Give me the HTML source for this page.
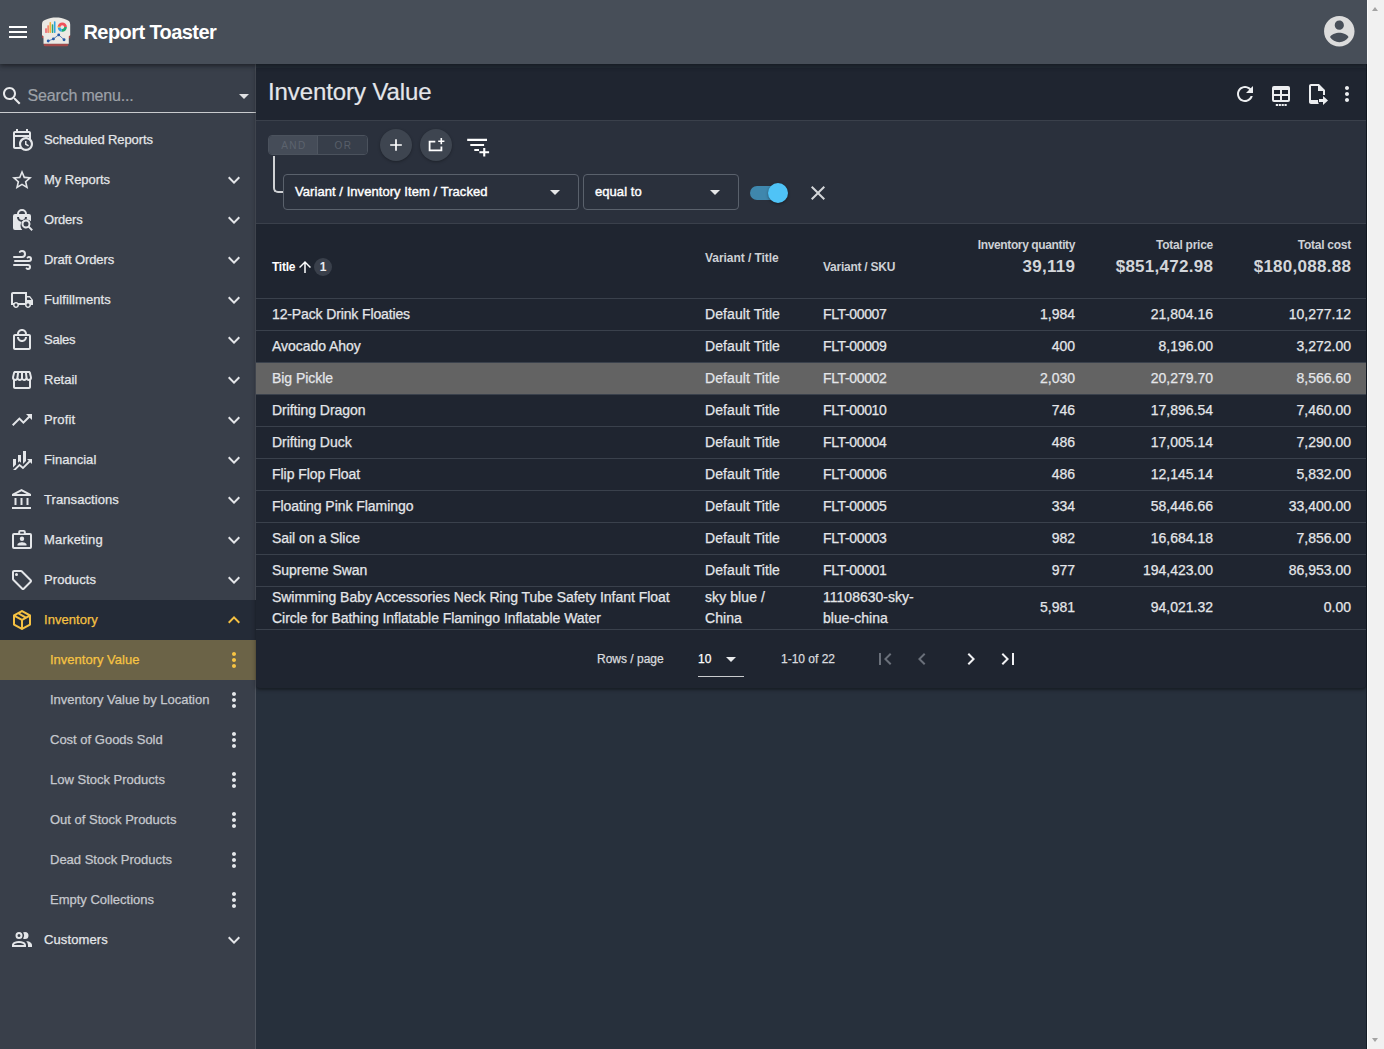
<!DOCTYPE html>
<html lang="en">
<head>
<meta charset="utf-8">
<title>Report Toaster - Inventory Value</title>
<style>
*{box-sizing:border-box;margin:0;padding:0}
html,body{width:1384px;height:1049px;overflow:hidden;background:#27303c;font-family:"Liberation Sans",sans-serif;color:#e6e8eb;-webkit-font-smoothing:antialiased}
svg{display:block;fill:currentColor}
.abs{position:absolute}
/* header */
#hdr{position:absolute;left:0;top:0;width:1367px;height:64px;background:#474e58;z-index:5;box-shadow:0 2px 4px rgba(0,0,0,.35),0 0 8px rgba(0,0,0,.2)}
#hdr .menu{position:absolute;left:6px;top:20px;width:24px;height:24px;color:#fff}
#hdr .logo{position:absolute;left:42px;top:18px;width:28px;height:28px;overflow:visible}
#hdr .ttl{position:absolute;left:83.500px;top:19px;font-size:20px;line-height:26px;font-weight:700;color:#fff;white-space:nowrap;letter-spacing:-.58px}
#hdr .acct{position:absolute;left:1320.900px;top:13px;width:36.600px;height:36.600px;color:#dcdcdc}
/* scrollbar */
#sb{position:absolute;left:1367px;top:0;width:17px;height:1049px;background:#f1f1f1;border-left:1px solid #fcfcfc;z-index:9}
#sb i{position:absolute;left:4px;width:0;height:0;border-left:3.700px solid transparent;border-right:3.700px solid transparent}
#sb i.u{top:7px;border-bottom:4px solid #a3a3a3}
#sb i.d{bottom:7px;border-top:4px solid #a3a3a3}
/* sidebar */
#side{position:absolute;left:0;top:64px;width:256px;height:985px;background:#393f4a;border-right:1px solid #4d535d}
#side .search{position:absolute;left:0;top:8px;width:256px;height:41px;border-bottom:1px solid #c9cbce}
#side .search .si{position:absolute;left:0;top:12px;width:24px;height:24px;color:#e9eaec}
#side .search .ph{position:absolute;left:27.500px;top:14px;font-size:16px;line-height:20px;color:#9da1a8;white-space:nowrap;letter-spacing:-.18px;-webkit-text-stroke:.2px}
#side .search .dd{position:absolute;left:232px;top:12px;width:24px;height:24px;color:#e0e1e3}
.mi{position:absolute;left:0;width:256px;height:40px;color:#e4e6e9;font-size:13px;letter-spacing:0;-webkit-text-stroke:.25px}
.mi .ic{position:absolute;left:10px;top:8px;width:24px;height:24px}
.mi .lb{position:absolute;left:44px;top:0;line-height:40px;white-space:nowrap}
.mi .ch{position:absolute;left:222px;top:8px;width:24px;height:24px}
.mi.sub .lb{left:50px;color:#c6c9ce;letter-spacing:0}
.mi.open{background:#242b37;color:#f5c142}
.mi.sel{background:#6b6347}
.mi.sel .lb{color:#f7c443}
.mi.sel .ch{color:#f7c443}
/* main */
#card{position:absolute;left:256px;top:68px;width:1110px;height:620px;border-radius:0 0 4px 4px;background:#1f2530;box-shadow:0 1px 5px rgba(0,0,0,.3),0 2px 2px rgba(0,0,0,.2)}
#pt{position:absolute;left:12px;top:8px;font-size:24px;line-height:32px;color:#e4e6ea;white-space:nowrap;letter-spacing:-.1px;-webkit-text-stroke:.2px}
.tb{position:absolute;top:14px;width:24px;height:24px;color:#eceef0}
#fp{position:absolute;left:0;top:52px;width:1110px;height:104px;background:#2a303c;border-top:1px solid #3a404b;border-bottom:1px solid #3a404b}

.andor{position:absolute;left:12px;top:14px;width:100px;height:20px;border:1px solid #4b525d;border-radius:4px;overflow:hidden;font-size:10px;line-height:19px;letter-spacing:1.5px;color:#5c636e;text-align:center}
.andor .a{position:absolute;left:0;top:0;width:49px;height:18px;background:#454c58;border-right:1px solid #4f5661;padding-left:2px}
.andor .o{position:absolute;left:49px;top:0;width:49px;height:18px;background:#373e4a;padding-left:2px;color:#575e69}
.rb{position:absolute;top:8px;width:32px;height:32px;border-radius:50%;background:#3e4550;box-shadow:0 1px 3px rgba(0,0,0,.3);color:#fff}
.rb svg{position:absolute}
.fadd{position:absolute;left:208px;top:11px;width:28px;height:28px;color:#fff}
.conn{position:absolute;left:17px;top:35px;width:11px;height:37px;border-left:2px solid #cfd1d4;border-bottom:2px solid #cfd1d4;border-bottom-left-radius:5px}
.dds{position:absolute;top:53px;height:36px;border:1px solid #5a616c;border-radius:4px;font-size:13px;color:#fff;white-space:nowrap;-webkit-text-stroke:.4px;letter-spacing:.06px}
.dds span{position:absolute;left:11px;top:0;line-height:33px}
.dds svg{position:absolute;right:11px;top:5px;width:24px;height:24px;color:#e6e7e9}
.tog{position:absolute;left:494px;top:65px;width:36px;height:14px;border-radius:7px;background:#3f87ad}
.tog i{position:absolute;left:18px;top:-3px;width:20px;height:20px;border-radius:50%;background:#4fc3f7;box-shadow:0 1px 3px rgba(0,0,0,.4)}
.cx{position:absolute;left:550px;top:60px;width:24px;height:24px;color:#d4d6d9}
#th{position:absolute;left:0;top:156px;width:1110px;height:75px;border-bottom:1px solid #3a414c;font-weight:700;font-size:12px;color:#cdd0d5;white-space:nowrap;letter-spacing:-.25px}
#th span{position:absolute;line-height:16px}
#th .h1{left:16px;top:35px;color:#fff}
#th .up{position:absolute;left:40px;top:34.400px;width:18px;height:18px;color:#fff}
#th .bdg{left:58px;top:34.200px;width:18px;height:18px;line-height:18px;border-radius:50%;background:#3a404b;text-align:center;color:#e8eaed}
#th .h2{left:449px;top:26px;letter-spacing:-.05px}
#th .h3{left:567px;top:35px}
#th .hr{top:13px}
#th .hs{top:32px;font-size:17px;line-height:22px;color:#d3d6da;letter-spacing:.28px;margin-right:-.28px}
.tr{position:absolute;left:0;width:1110px;height:32px;border-bottom:1px solid #3a414c;font-size:14px;line-height:31px;color:#e4e6e9;white-space:nowrap;-webkit-text-stroke:.25px}
.tr span{position:absolute;top:0}
.tr .c1{left:16px;letter-spacing:-.04px}.tr .c2{left:449px;letter-spacing:.08px}.tr .c3{left:567px;letter-spacing:-.36px}
.tr .c4{right:291px}.tr .c5{right:153px}.tr .c6{right:15px}
.tr.hl{background:#636363}
.tr.tall{height:43px;line-height:40.500px}
.tr.tall .c1,.tr.tall .c2,.tr.tall .c3{line-height:21px}
#pg{position:absolute;left:0;top:563px;width:1110px;height:57px;font-size:12px;color:#d9dbdf;white-space:nowrap;-webkit-text-stroke:.25px}
#pg span{position:absolute;line-height:16px;top:20px}
#pg .rp{left:341px}#pg .rn{left:442px;color:#fff}#pg .cnt{left:525px}
#pg .ul{position:absolute;left:442px;top:44.500px;width:46px;height:1px;background:#c9cbce}
.pa{position:absolute;top:16px;width:24px;height:24px}
</style>
</head>
<body>
<div id="hdr">
  <svg class="menu" viewBox="0 0 24 24"><path d="M3 18h18v-2H3v2zm0-5h18v-2H3v2zm0-7v2h18V6H3z"/></svg>
  <svg class="logo" viewBox="0 0 28 28">
    <path d="M1.700 25.400h24.600v1.300a1.500 1.500 0 0 1-1.500 1.500H3.200a1.500 1.500 0 0 1-1.500-1.500z" fill="#a24a4a"/>
    <rect x="-.1" y="17" width="28.300" height="3.200" rx="1" fill="#a74545"/>
    <path d="M0 6.500C0 3.500 1.200 2.600 3.500 1.700 7 .100 10.500-.450 14-.450s7 .550 10.500 2.150C26.800 2.600 28.200 3.500 28.200 6.500V17.200l-1.400 1V25.800H1.500V18.200L0 17.200z" fill="#ebe9e4"/>
    <rect x="3" y="10.200" width="2.100" height="4.700" rx=".6" fill="#ee7b82"/>
    <rect x="5.300" y="7.200" width="1.800" height="7.700" rx=".6" fill="#f08a70"/>
    <rect x="7.500" y="4.100" width="1.600" height="10.800" rx=".6" fill="#f6b23c"/>
    <rect x="9.800" y="6.200" width="1.500" height="8.700" rx=".6" fill="#2fa56f"/>
    <rect x="11.900" y="3.300" width="1.600" height="11.600" rx=".6" fill="#2ea4e4"/>
    <g fill="none" stroke-width="2.700">
      <path d="M17.050 9.100A3.250 3.250 0 0 1 23.550 9.100" stroke="#f0525a"/>
      <path d="M23.550 9.100A3.250 3.250 0 0 1 19.700 12.300" stroke="#1fa973"/>
      <path d="M19.700 12.300A3.250 3.250 0 0 1 17.050 9.300" stroke="#2ea4e4"/>
      <path d="M17.050 9.400A3.250 3.250 0 0 1 17.150 8.300" stroke="#f9b233"/>
    </g>
    <path d="M6.200 23L11.400 20.900 16.700 16.900 22.050 21.700" fill="none" stroke="#2a5ca8" stroke-width=".7"/>
    <g fill="#2458a6"><circle cx="6.200" cy="23" r="1.450"/><circle cx="11.400" cy="20.900" r="1.450"/><circle cx="16.700" cy="16.900" r="1.450"/><circle cx="22.050" cy="21.700" r="1.450"/></g>
  </svg>
  <div class="ttl">Report Toaster</div>
  <svg class="acct" viewBox="0 0 24 24"><path d="M12 2C6.48 2 2 6.48 2 12s4.48 10 10 10 10-4.480 10-10S17.520 2 12 2zm0 3c1.660 0 3 1.340 3 3s-1.340 3-3 3-3-1.340-3-3 1.340-3 3-3zm0 14.200c-2.500 0-4.710-1.280-6-3.220.030-1.990 4-3.080 6-3.080 1.990 0 5.970 1.090 6 3.080-1.290 1.940-3.500 3.220-6 3.220z"/></svg>
</div>
<div style="position:absolute;left:1366px;top:64px;width:1px;height:985px;background:#151d27"></div>
<div id="sb"><i class="u"></i><i class="d"></i></div>
<div id="side">
  <div class="search">
    <svg class="si" viewBox="0 0 24 24"><path d="M15.500 14h-.790l-.280-.270C15.410 12.590 16 11.110 16 9.500 16 5.910 13.090 3 9.500 3S3 5.910 3 9.500 5.910 16 9.500 16c1.610 0 3.090-.590 4.230-1.570l.270.280v.790l5 4.990L20.490 19l-4.990-5zm-6 0C7.010 14 5 11.990 5 9.500S7.010 5 9.500 5 14 7.010 14 9.500 11.990 14 9.500 14z"/></svg>
    <div class="ph">Search menu...</div>
    <svg class="dd" viewBox="0 0 24 24"><path d="M7 10l5 5 5-5z"/></svg>
  </div>
  <!--MENU-->
  <div class="mi " style="top:56px"><svg class="ic" viewBox="0 0 24 24"><path d="M6 1V3H5C3.89 3 3 3.890 3 5V19C3 20.100 3.890 21 5 21H11.100C12.360 22.240 14.090 23 16 23C19.870 23 23 19.870 23 16C23 14.090 22.240 12.360 21 11.100V5C21 3.900 20.110 3 19 3H18V1H16V3H8V1M5 5H19V7H5M5 9H19V9.670C18.090 9.240 17.070 9 16 9C12.130 9 9 12.130 9 16C9 17.070 9.240 18.090 9.670 19H5M16 11.150C18.680 11.150 20.850 13.320 20.850 16C20.850 18.680 18.680 20.850 16 20.850C13.320 20.850 11.150 18.680 11.150 16C11.150 13.320 13.320 11.150 16 11.150M15 13V16.690L18.190 18.530L18.940 17.230L16.500 15.820V13Z"/></svg><span class="lb" style="letter-spacing:-0.1px">Scheduled Reports</span></div>
  <div class="mi " style="top:96px"><svg class="ic" viewBox="0 0 24 24"><path d="M22 9.240l-7.190-.620L12 2 9.190 8.630 2 9.240l5.460 4.730L5.820 21 12 17.270 18.180 21l-1.630-7.030L22 9.240zM12 15.400l-3.760 2.270 1-4.280-3.320-2.880 4.380-.380L12 6.100l1.710 4.040 4.380.380-3.320 2.880 1 4.280L12 15.400z"/></svg><span class="lb" style="letter-spacing:-0.05px">My Reports</span><svg class="ch" viewBox="0 0 24 24"><path d="M16.590 8.590L12 13.170 7.410 8.590 6 10l6 6 6-6z"/></svg></div>
  <div class="mi " style="top:136px"><svg class="ic" viewBox="0 0 24 24"><path fill-rule="evenodd" d="M5 6h2a5 5 0 0 1 10 0h2a2 2 0 0 1 2 2v5.300a6 6 0 0 0-8.700 8.700H5a2 2 0 0 1-2-2V8a2 2 0 0 1 2-2zm4 0h6a3 3 0 0 0-6 0zm0 3H7a5 5 0 0 0 10 0h-2a3 3 0 0 1-6 0z"/><path fill-rule="evenodd" d="M16 11.500a4.500 4.500 0 0 1 3.800 6.900l3.100 3.100-1.400 1.400-3.100-3.100A4.500 4.500 0 1 1 16 11.500zm0 2a2.500 2.500 0 1 0 0 5 2.500 2.500 0 0 0 0-5z"/></svg><span class="lb" style="letter-spacing:-0.2px">Orders</span><svg class="ch" viewBox="0 0 24 24"><path d="M16.590 8.590L12 13.170 7.410 8.590 6 10l6 6 6-6z"/></svg></div>
  <div class="mi " style="top:176px"><svg class="ic" viewBox="0 0 24 24"><path d="M4,10A1,1 0 0,1 3,9A1,1 0 0,1 4,8H12A2,2 0 0,0 14,6A2,2 0 0,0 12,4C11.450,4 10.950,4.220 10.590,4.590C10.200,5 9.560,5 9.170,4.590C8.780,4.200 8.780,3.560 9.170,3.170C9.900,2.450 10.900,2 12,2A4,4 0 0,1 16,6A4,4 0 0,1 12,10H4M19,12A1,1 0 0,0 20,11A1,1 0 0,0 19,10C18.720,10 18.470,10.110 18.290,10.290C17.900,10.680 17.270,10.680 16.880,10.290C16.500,9.900 16.500,9.270 16.880,8.880C17.420,8.340 18.170,8 19,8A3,3 0 0,1 22,11A3,3 0 0,1 19,14H5A1,1 0 0,1 4,13A1,1 0 0,1 5,12H19M18,18H4A1,1 0 0,1 3,17A1,1 0 0,1 4,16H18A3,3 0 0,1 21,19A3,3 0 0,1 18,22C17.170,22 16.420,21.660 15.880,21.120C15.500,20.730 15.500,20.100 15.880,19.710C16.270,19.320 16.900,19.320 17.290,19.710C17.470,19.890 17.720,20 18,20A1,1 0 0,0 19,19A1,1 0 0,0 18,18Z"/></svg><span class="lb" style="letter-spacing:-0.12px">Draft Orders</span><svg class="ch" viewBox="0 0 24 24"><path d="M16.590 8.590L12 13.170 7.410 8.590 6 10l6 6 6-6z"/></svg></div>
  <div class="mi " style="top:216px"><svg class="ic" viewBox="0 0 24 24"><path d="M18 18.500C18.830 18.500 19.500 17.830 19.500 17C19.500 16.170 18.830 15.500 18 15.500C17.170 15.500 16.500 16.170 16.500 17C16.500 17.830 17.170 18.500 18 18.500M19.500 9.500H17V12H21.460L19.500 9.500M6 18.500C6.830 18.500 7.500 17.830 7.500 17C7.500 16.170 6.830 15.500 6 15.500C5.170 15.500 4.500 16.170 4.500 17C4.500 17.830 5.170 18.500 6 18.500M20 8L23 12V17H21C21 18.660 19.660 20 18 20C16.340 20 15 18.660 15 17H9C9 18.660 7.660 20 6 20C4.340 20 3 18.660 3 17H1V6C1 4.890 1.890 4 3 4H17V8H20M3 6V15H3.760C4.310 14.390 5.110 14 6 14C6.890 14 7.690 14.390 8.240 15H15V6H3Z"/></svg><span class="lb" style="letter-spacing:0.1px">Fulfillments</span><svg class="ch" viewBox="0 0 24 24"><path d="M16.590 8.590L12 13.170 7.410 8.590 6 10l6 6 6-6z"/></svg></div>
  <div class="mi " style="top:256px"><svg class="ic" viewBox="0 0 24 24"><path d="M19 6H17C17 3.200 14.800 1 12 1S7 3.200 7 6H5C3.900 6 3 6.900 3 8V20C3 21.100 3.900 22 5 22H19C20.100 22 21 21.100 21 20V8C21 6.900 20.100 6 19 6M12 3C13.700 3 15 4.300 15 6H9C9 4.300 10.300 3 12 3M19 20H5V8H19V20M12 12C10.300 12 9 10.700 9 9H7C7 11.800 9.200 14 12 14S17 11.800 17 9H15C15 10.700 13.700 12 12 12Z"/></svg><span class="lb" style="letter-spacing:-0.25px">Sales</span><svg class="ch" viewBox="0 0 24 24"><path d="M16.590 8.590L12 13.170 7.410 8.590 6 10l6 6 6-6z"/></svg></div>
  <div class="mi " style="top:296px"><svg class="ic" viewBox="0 0 24 24"><path d="M21.900 8.890l-1.050-4.370c-.220-.900-1-1.520-1.910-1.520H5.050c-.900 0-1.690.630-1.900 1.520L2.100 8.890c-.240 1.020-.020 2.060.620 2.880.080.110.190.190.280.290V19c0 1.100.900 2 2 2h14c1.100 0 2-.900 2-2v-6.940c.090-.090.200-.180.280-.280.640-.820.870-1.870.620-2.890zm-2.990-3.900l1.050 4.370c.100.420.010.840-.250 1.170-.140.180-.440.470-.940.470-.610 0-1.140-.490-1.210-1.140L16.980 5l1.930-.010zM13 5h1.960l.540 4.520c.050.390-.070.780-.330 1.070-.220.260-.540.410-.950.410-.670 0-1.220-.590-1.220-1.310V5zM8.490 9.520L9.040 5H11v4.690c0 .720-.550 1.310-1.290 1.310-.340 0-.650-.150-.890-.410-.250-.290-.370-.680-.330-1.070zm-4.450-.160L5.050 5h1.970l-.580 4.860c-.080.650-.600 1.140-1.210 1.140-.490 0-.800-.290-.930-.470-.270-.320-.360-.750-.260-1.170zM5 19v-6.030c.080.010.150.030.230.030.870 0 1.660-.360 2.240-.950.600.600 1.400.950 2.310.950.870 0 1.650-.360 2.230-.930.590.570 1.390.930 2.290.930.840 0 1.640-.350 2.240-.950.580.590 1.370.950 2.240.950.080 0 .150-.020.230-.030V19H5z"/></svg><span class="lb" style="letter-spacing:0px">Retail</span><svg class="ch" viewBox="0 0 24 24"><path d="M16.590 8.590L12 13.170 7.410 8.590 6 10l6 6 6-6z"/></svg></div>
  <div class="mi " style="top:336px"><svg class="ic" viewBox="0 0 24 24"><path d="M16,6L18.290,8.290L13.410,13.170L9.410,9.170L2,16.590L3.410,18L9.410,12L13.410,16L19.710,9.710L22,12V6H16Z"/></svg><span class="lb" style="letter-spacing:0.15px">Profit</span><svg class="ch" viewBox="0 0 24 24"><path d="M16.590 8.590L12 13.170 7.410 8.590 6 10l6 6 6-6z"/></svg></div>
  <div class="mi " style="top:376px"><svg class="ic" viewBox="0 0 24 24"><path d="M6,16.500L3,19.440V11H6M11,14.660L9.430,13.320L8,14.640V7H11M16,13L13,16V3H16M18.810,12.810L17,11H22V16L20.210,14.210L13,21.360L9.530,18.340L5.750,22H3L9.470,15.660L13,18.640"/></svg><span class="lb" style="letter-spacing:0.03px">Financial</span><svg class="ch" viewBox="0 0 24 24"><path d="M16.590 8.590L12 13.170 7.410 8.590 6 10l6 6 6-6z"/></svg></div>
  <div class="mi " style="top:416px"><svg class="ic" viewBox="0 0 24 24"><path d="M6.500 10h-2v7h2v-7zm6 0h-2v7h2v-7zm8.500 9H2v2h19v-2zm-2.500-9h-2v7h2v-7zm-7-6.740L16.710 6H6.290l5.210-2.740m0-2.260L2 6v2h19V6l-9.500-5z"/></svg><span class="lb" style="letter-spacing:0.08px">Transactions</span><svg class="ch" viewBox="0 0 24 24"><path d="M16.590 8.590L12 13.170 7.410 8.590 6 10l6 6 6-6z"/></svg></div>
  <div class="mi " style="top:456px"><svg class="ic" viewBox="0 0 24 24"><path fill-rule="evenodd" d="M4 5h4.200V4a2 2 0 0 1 2-2h3.600a2 2 0 0 1 2 2v1H20a2 2 0 0 1 2 2v12a2 2 0 0 1-2 2H4a2 2 0 0 1-2-2V7a2 2 0 0 1 2-2zm0 2v12h16V7zm6.200-3.200v1.700h3.600V3.800z"/><circle cx="12" cy="10.800" r="2.200"/><path d="M7.500 17.500v-.900c0-1.500 3-2.300 4.500-2.300s4.500.800 4.500 2.300v.900z"/></svg><span class="lb" style="letter-spacing:0.2px">Marketing</span><svg class="ch" viewBox="0 0 24 24"><path d="M16.590 8.590L12 13.170 7.410 8.590 6 10l6 6 6-6z"/></svg></div>
  <div class="mi " style="top:496px"><svg class="ic" viewBox="0 0 24 24"><path d="M21.410,11.580L12.410,2.580C12.040,2.210 11.530,2 11,2H4A2,2 0 0,0 2,4V11C2,11.530 2.210,12.040 2.590,12.410L11.580,21.410C11.950,21.780 12.470,22 13,22C13.530,22 14.040,21.790 14.410,21.410L21.410,14.410C21.790,14.040 22,13.530 22,13C22,12.470 21.790,11.960 21.410,11.580M13,20L4,11V4H11L20,13M6.500,5A1.500,1.500 0 0,1 8,6.500A1.500,1.500 0 0,1 6.500,8A1.500,1.500 0 0,1 5,6.500A1.500,1.500 0 0,1 6.500,5Z"/></svg><span class="lb" style="letter-spacing:0.1px">Products</span><svg class="ch" viewBox="0 0 24 24"><path d="M16.590 8.590L12 13.170 7.410 8.590 6 10l6 6 6-6z"/></svg></div>
  <div class="mi open" style="top:536px"><svg class="ic" viewBox="0 0 24 24"><path d="M21,16.500C21,16.880 20.790,17.210 20.470,17.380L12.570,21.820C12.410,21.940 12.210,22 12,22C11.790,22 11.590,21.940 11.430,21.820L3.530,17.380C3.210,17.210 3,16.880 3,16.500V7.500C3,7.120 3.210,6.790 3.530,6.620L11.430,2.180C11.590,2.060 11.790,2 12,2C12.210,2 12.410,2.060 12.570,2.180L20.470,6.620C20.790,6.790 21,7.120 21,7.500V16.500M12,4.150L10.110,5.220L16,8.610L17.960,7.500L12,4.150M6.040,7.500L12,10.850L13.960,9.750L8.080,6.350L6.040,7.500M5,15.910L11,19.290V12.580L5,9.210V15.910M19,15.910V9.210L13,12.580V19.290L19,15.910Z"/></svg><span class="lb" style="letter-spacing:0.05px">Inventory</span><svg class="ch" viewBox="0 0 24 24"><path d="M12 8l-6 6 1.410 1.410L12 10.830l4.590 4.580L18 14z"/></svg></div>
  <div class="mi sub sel" style="top:576px"><span class="lb">Inventory Value</span><svg class="ch" viewBox="0 0 24 24"><path d="M12 8c1.100 0 2-.900 2-2s-.900-2-2-2-2 .900-2 2 .900 2 2 2zm0 2c-1.100 0-2 .900-2 2s.900 2 2 2 2-.900 2-2-.900-2-2-2zm0 6c-1.100 0-2 .900-2 2s.900 2 2 2 2-.900 2-2-.900-2-2-2z"/></svg></div>
  <div class="mi sub" style="top:616px"><span class="lb">Inventory Value by Location</span><svg class="ch" viewBox="0 0 24 24"><path d="M12 8c1.100 0 2-.900 2-2s-.900-2-2-2-2 .900-2 2 .900 2 2 2zm0 2c-1.100 0-2 .900-2 2s.900 2 2 2 2-.900 2-2-.900-2-2-2zm0 6c-1.100 0-2 .900-2 2s.900 2 2 2 2-.900 2-2-.900-2-2-2z"/></svg></div>
  <div class="mi sub" style="top:656px"><span class="lb">Cost of Goods Sold</span><svg class="ch" viewBox="0 0 24 24"><path d="M12 8c1.100 0 2-.900 2-2s-.900-2-2-2-2 .900-2 2 .900 2 2 2zm0 2c-1.100 0-2 .900-2 2s.900 2 2 2 2-.900 2-2-.900-2-2-2zm0 6c-1.100 0-2 .900-2 2s.900 2 2 2 2-.900 2-2-.900-2-2-2z"/></svg></div>
  <div class="mi sub" style="top:696px"><span class="lb">Low Stock Products</span><svg class="ch" viewBox="0 0 24 24"><path d="M12 8c1.100 0 2-.900 2-2s-.900-2-2-2-2 .900-2 2 .900 2 2 2zm0 2c-1.100 0-2 .900-2 2s.900 2 2 2 2-.900 2-2-.900-2-2-2zm0 6c-1.100 0-2 .900-2 2s.900 2 2 2 2-.900 2-2-.900-2-2-2z"/></svg></div>
  <div class="mi sub" style="top:736px"><span class="lb">Out of Stock Products</span><svg class="ch" viewBox="0 0 24 24"><path d="M12 8c1.100 0 2-.900 2-2s-.900-2-2-2-2 .900-2 2 .900 2 2 2zm0 2c-1.100 0-2 .900-2 2s.900 2 2 2 2-.900 2-2-.900-2-2-2zm0 6c-1.100 0-2 .900-2 2s.900 2 2 2 2-.900 2-2-.900-2-2-2z"/></svg></div>
  <div class="mi sub" style="top:776px"><span class="lb">Dead Stock Products</span><svg class="ch" viewBox="0 0 24 24"><path d="M12 8c1.100 0 2-.900 2-2s-.900-2-2-2-2 .900-2 2 .900 2 2 2zm0 2c-1.100 0-2 .900-2 2s.900 2 2 2 2-.900 2-2-.900-2-2-2zm0 6c-1.100 0-2 .900-2 2s.900 2 2 2 2-.900 2-2-.900-2-2-2z"/></svg></div>
  <div class="mi sub" style="top:816px"><span class="lb">Empty Collections</span><svg class="ch" viewBox="0 0 24 24"><path d="M12 8c1.100 0 2-.900 2-2s-.900-2-2-2-2 .900-2 2 .900 2 2 2zm0 2c-1.100 0-2 .900-2 2s.900 2 2 2 2-.900 2-2-.900-2-2-2zm0 6c-1.100 0-2 .900-2 2s.900 2 2 2 2-.900 2-2-.900-2-2-2z"/></svg></div>
  <div class="mi " style="top:856px"><svg class="ic" viewBox="0 0 24 24"><path d="M13.070 10.410A5 5 0 0 0 13.070 4.590A3.390 3.390 0 0 1 15 4A3.500 3.500 0 0 1 15 11A3.390 3.390 0 0 1 13.070 10.410M5.500 7.500A3.500 3.500 0 1 1 9 11A3.500 3.500 0 0 1 5.500 7.500M7.500 7.500A1.500 1.500 0 1 0 9 6A1.500 1.500 0 0 0 7.500 7.500M16 17V19H2V17S2 13 9 13 16 17 16 17M14 17C13.860 16.220 12.670 15 9 15S4.070 16.310 4 17M15.950 13A5.320 5.320 0 0 1 18 17V19H22V17S22 13.370 15.940 13Z"/></svg><span class="lb" style="letter-spacing:0.1px">Customers</span><svg class="ch" viewBox="0 0 24 24"><path d="M16.590 8.590L12 13.170 7.410 8.590 6 10l6 6 6-6z"/></svg></div>
  <!--/MENU-->
</div>
<div id="card">
  <div id="pt">Inventory Value</div>
  <svg class="tb" style="left:977px" viewBox="0 0 24 24"><path d="M17.650 6.350C16.200 4.900 14.210 4 12 4c-4.420 0-7.990 3.580-7.990 8s3.570 8 7.990 8c3.730 0 6.840-2.550 7.730-6h-2.080c-.820 2.330-3.040 4-5.650 4-3.310 0-6-2.690-6-6s2.690-6 6-6c1.660 0 3.140.690 4.220 1.780L13 11h7V4l-2.350 2.350z"/></svg>
  <svg class="tb" style="left:1013px" viewBox="0 0 24 24"><path d="M5,4H19A2,2 0 0,1 21,6V18A2,2 0 0,1 19,20H5A2,2 0 0,1 3,18V6A2,2 0 0,1 5,4M5,8V12H11V8H5M13,8V12H19V8H13M5,14V18H11V14H5M13,14V18H19V14H13Z"/><path d="M6.800 22h2.200v2H6.800zM9.700 22h2.200v2H9.700zM12.600 22h2.200v2h-2.200zM15.500 22h2.200v2h-2.200z"/></svg>
  <svg class="tb" style="left:1049px" viewBox="0 0 24 24"><path d="M14 2H6C4.900 2 4 2.900 4 4V20C4 21.100 4.900 22 6 22H13.810C13.280 21.090 13 20.050 13 19C13 18.670 13.030 18.330 13.080 18H6V4H13V9H18V13.080C18.330 13.030 18.670 13 19 13C19.340 13 19.670 13.030 20 13.080V8L14 2M18 23L23 18.500L20 15.800L18 14V17H14V20H18V23Z"/></svg>
  <svg class="tb" style="left:1079px" viewBox="0 0 24 24"><path d="M12 8c1.100 0 2-.900 2-2s-.900-2-2-2-2 .900-2 2 .900 2 2 2zm0 2c-1.100 0-2 .900-2 2s.900 2 2 2 2-.900 2-2-.900-2-2-2zm0 6c-1.100 0-2 .900-2 2s.900 2 2 2 2-.900 2-2-.900-2-2-2z"/></svg>
  <div id="fp">
  <div class="andor"><span class="a">AND</span><span class="o">OR</span></div>
    <div class="rb" style="left:124px"><svg viewBox="0 0 24 24" style="left:6px;top:6.400px;width:20px;height:20px"><path d="M19 13h-6v6h-2v-6H5v-2h6V5h2v6h6v2z"/></svg></div>
    <div class="rb" style="left:164px"><svg viewBox="0 0 32 32" style="left:0;top:0;width:32px;height:32px"><path d="M15.300 11.700H8.700v10.500h13.600v-4.700h-1.800v2.900H10.500v-6.900h4.800z"/><path d="M20.500 9.100h1.600v2.300h2.300v1.600h-2.300v2.300h-1.600v-2.300h-2.300v-1.600h2.300z"/></svg></div>
    <svg class="fadd" viewBox="0 0 28 28"><path d="M3.200 6.800h19.800v2.200H3.200zM6.300 11.900h13.800v2.200H6.300zM10.300 16.900h4.700v2.200h-4.700zM19.200 16h2.100v3.200h3.800v2.100h-3.800v3.200h-2.100v-3.200h-3.800v-2.100h3.800z"/></svg>
    <div class="conn"></div>
    <div class="dds" style="left:27px;width:296px"><span>Variant / Inventory Item / Tracked</span><svg viewBox="0 0 24 24"><path d="M7 10l5 5 5-5z"/></svg></div>
    <div class="dds" style="left:327px;width:156px"><span>equal to</span><svg viewBox="0 0 24 24"><path d="M7 10l5 5 5-5z"/></svg></div>
    <div class="tog"><i></i></div>
    <svg class="cx" viewBox="0 0 24 24"><path d="M19 6.410L17.590 5 12 10.590 6.410 5 5 6.410 10.590 12 5 17.590 6.410 19 12 13.410 17.590 19 19 17.590 13.410 12z"/></svg>
  </div>
  <div id="th">
    <span class="h1">Title</span>
    <svg class="up" viewBox="0 0 24 24"><path d="M4 12l1.410 1.410L11 7.830V20h2V7.830l5.580 5.590L20 12l-8-8-8 8z"/></svg>
    <span class="bdg">1</span>
    <span class="h2">Variant / Title</span>
    <span class="h3">Variant / SKU</span>
    <span class="hr" style="right:291px;letter-spacing:-.38px">Inventory quantity</span><span class="hs" style="right:291px">39,119</span>
    <span class="hr" style="right:153px">Total price</span><span class="hs" style="right:153px">$851,472.98</span>
    <span class="hr" style="right:15px">Total cost</span><span class="hs" style="right:15px">$180,088.88</span>
  </div>
  <!--ROWS-->
  <div class="tr" style="top:231px"><span class="c1" style="letter-spacing:-.13px">12-Pack Drink Floaties</span><span class="c2">Default Title</span><span class="c3">FLT-00007</span><span class="c4">1,984</span><span class="c5">21,804.16</span><span class="c6">10,277.12</span></div>
  <div class="tr" style="top:263px"><span class="c1">Avocado Ahoy</span><span class="c2">Default Title</span><span class="c3">FLT-00009</span><span class="c4">400</span><span class="c5">8,196.00</span><span class="c6">3,272.00</span></div>
  <div class="tr hl" style="top:295px"><span class="c1">Big Pickle</span><span class="c2">Default Title</span><span class="c3">FLT-00002</span><span class="c4">2,030</span><span class="c5">20,279.70</span><span class="c6">8,566.60</span></div>
  <div class="tr" style="top:327px"><span class="c1">Drifting Dragon</span><span class="c2">Default Title</span><span class="c3">FLT-00010</span><span class="c4">746</span><span class="c5">17,896.54</span><span class="c6">7,460.00</span></div>
  <div class="tr" style="top:359px"><span class="c1">Drifting Duck</span><span class="c2">Default Title</span><span class="c3">FLT-00004</span><span class="c4">486</span><span class="c5">17,005.14</span><span class="c6">7,290.00</span></div>
  <div class="tr" style="top:391px"><span class="c1">Flip Flop Float</span><span class="c2">Default Title</span><span class="c3">FLT-00006</span><span class="c4">486</span><span class="c5">12,145.14</span><span class="c6">5,832.00</span></div>
  <div class="tr" style="top:423px"><span class="c1">Floating Pink Flamingo</span><span class="c2">Default Title</span><span class="c3">FLT-00005</span><span class="c4">334</span><span class="c5">58,446.66</span><span class="c6">33,400.00</span></div>
  <div class="tr" style="top:455px"><span class="c1">Sail on a Slice</span><span class="c2">Default Title</span><span class="c3">FLT-00003</span><span class="c4">982</span><span class="c5">16,684.18</span><span class="c6">7,856.00</span></div>
  <div class="tr" style="top:487px"><span class="c1">Supreme Swan</span><span class="c2">Default Title</span><span class="c3">FLT-00001</span><span class="c4">977</span><span class="c5">194,423.00</span><span class="c6">86,953.00</span></div>
  <div class="tr tall" style="top:519px"><span class="c1">Swimming Baby Accessories Neck Ring Tube Safety Infant Float<br>Circle for Bathing Inflatable Flamingo Inflatable Water</span><span class="c2">sky blue /<br>China</span><span class="c3" style="letter-spacing:.02px">11108630-sky-<br>blue-china</span><span class="c4">5,981</span><span class="c5">94,021.32</span><span class="c6">0.00</span></div>
  <!--/ROWS-->
  <div id="pg">
    <span class="rp">Rows / page</span>
    <span class="rn">10</span>
    <svg class="pa" style="left:463.300px;top:15.500px;color:#e8eaec" viewBox="0 0 24 24"><path d="M7 10l5 5 5-5z"/></svg>
    <div class="ul"></div>
    <span class="cnt">1-10 of 22</span>
    <svg class="pa" style="left:617px;color:#6a707a" viewBox="0 0 24 24"><path d="M18.410 16.590L13.820 12l4.590-4.590L17 6l-6 6 6 6zM6 6h2v12H6z"/></svg>
    <svg class="pa" style="left:654px;color:#6a707a" viewBox="0 0 24 24"><path d="M15.410 7.410L14 6l-6 6 6 6 1.410-1.410L10.830 12z"/></svg>
    <svg class="pa" style="left:703px;color:#f0f1f3" viewBox="0 0 24 24"><path d="M10 6L8.590 7.410 13.170 12l-4.580 4.590L10 18l6-6z"/></svg>
    <svg class="pa" style="left:740px;color:#f0f1f3" viewBox="0 0 24 24"><path d="M5.590 7.410L10.180 12l-4.590 4.590L7 18l6-6-6-6zM16 6h2v12h-2z"/></svg>
  </div>
</div>
</body>
</html>
